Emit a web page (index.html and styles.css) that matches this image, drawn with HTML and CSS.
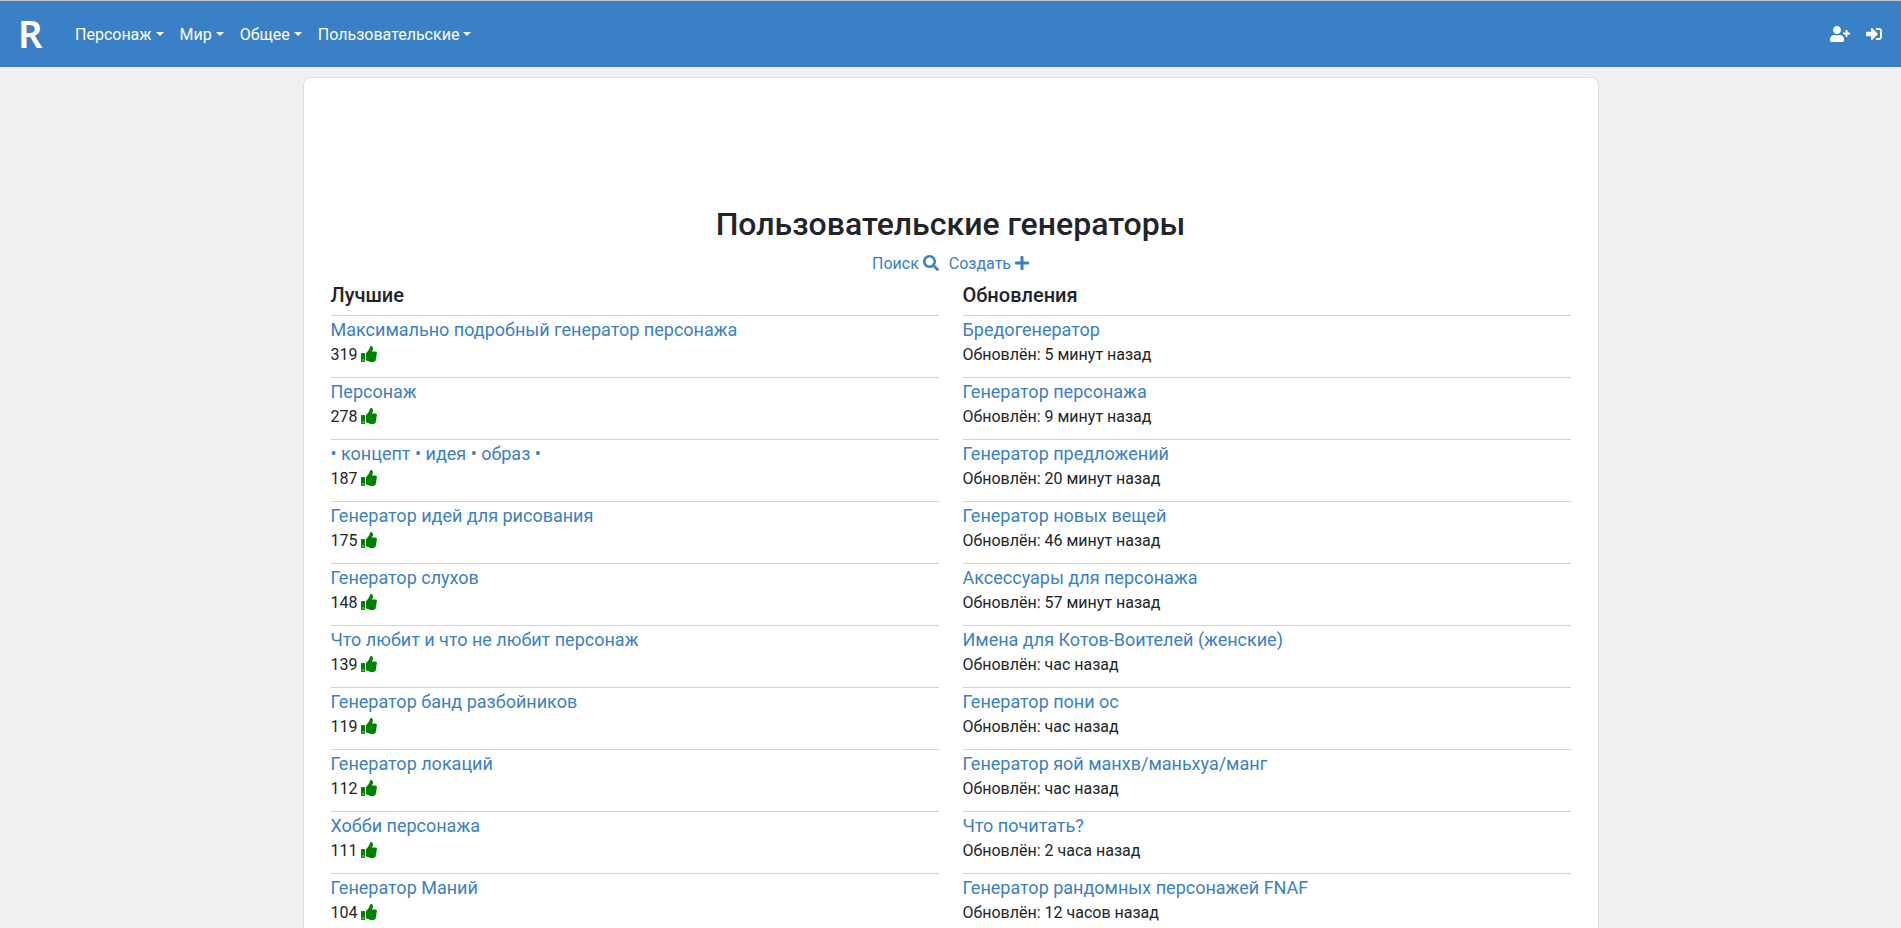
FILE: index.html
```html
<!DOCTYPE html>
<html lang="ru">
<head>
<meta charset="utf-8">
<title>Пользовательские генераторы</title>
<link rel="stylesheet" href="styles.css">
</head>
<body>
<svg class="sprite" aria-hidden="true">
  <symbol id="thumb" viewBox="0 0 512 512"><path d="M104 224H24c-13.255 0-24 10.745-24 24v240c0 13.255 10.745 24 24 24h80c13.255 0 24-10.745 24-24V248c0-13.255-10.745-24-24-24zM64 472c-13.255 0-24-10.745-24-24s10.745-24 24-24 24 10.745 24 24-10.745 24-24 24zM384 81.452c0 42.416-25.97 66.208-33.277 94.548h101.723c33.397 0 59.397 27.746 59.553 58.098.084 17.938-7.546 37.249-19.439 49.197l-.11.11c9.836 23.337 8.237 56.037-9.308 79.469 8.681 25.895-.069 57.704-16.382 74.757 4.298 17.598 2.244 32.575-6.148 44.632C440.202 511.587 389.616 512 346.839 512l-2.845-.001c-48.287-.017-87.806-17.598-119.56-31.725-15.957-7.099-36.821-15.887-52.651-16.178-6.54-.12-11.783-5.457-11.783-11.998v-213.77c0-3.2 1.282-6.271 3.558-8.521 39.614-39.144 56.648-80.587 89.117-113.111 14.804-14.832 20.188-37.236 25.393-58.902C282.515 39.293 291.817 0 312 0c24 0 72 8 72 81.452z"/></symbol>
</svg>
<nav class="navbar">
  <a class="brand" href="#">R</a>
  <div class="menu">
    <button class="menu-item" type="button">Персонаж</button>
    <button class="menu-item" type="button">Мир</button>
    <button class="menu-item" type="button">Общее</button>
    <button class="menu-item" type="button">Пользовательские</button>
  </div>
  <div class="account">
    <a class="account-link" href="#" aria-label="Регистрация"><svg class="icon icon-wide" viewBox="0 0 640 512"><path d="M624 208h-64v-64c0-8.800-7.200-16-16-16h-32c-8.800 0-16 7.200-16 16v64h-64c-8.800 0-16 7.200-16 16v32c0 8.800 7.200 16 16 16h64v64c0 8.800 7.200 16 16 16h32c8.800 0 16-7.200 16-16v-64h64c8.800 0 16-7.200 16-16v-32c0-8.800-7.200-16-16-16zM224 256c70.700 0 128-57.300 128-128S294.700 0 224 0 96 57.300 96 128s57.300 128 128 128zm89.600 32h-16.700c-22.200 10.200-46.900 16-72.900 16s-50.600-5.800-72.900-16h-16.700C60.200 288 0 348.200 0 422.400V464c0 26.500 21.500 48 48 48h352c26.500 0 48-21.500 48-48v-41.600c0-74.200-60.200-134.400-134.400-134.400z"/></svg></a>
    <a class="account-link" href="#" aria-label="Вход"><svg class="icon" viewBox="0 0 512 512"><path d="M416 448h-84c-6.600 0-12-5.400-12-12v-40c0-6.600 5.400-12 12-12h84c17.700 0 32-14.300 32-32V160c0-17.700-14.300-32-32-32h-84c-6.600 0-12-5.400-12-12V76c0-6.600 5.400-12 12-12h84c53 0 96 43 96 96v192c0 53-43 96-96 96zm-47-209L201 71c-15-15-41-4.500-41 17v96H24c-13.300 0-24 10.700-24 24v96c0 13.300 10.700 24 24 24h136v96c0 21.500 26 32 41 17l168-168c9.300-9.400 9.300-24.600 0-34z"/></svg></a>
  </div>
</nav>
<main class="card">
  <h1 class="title">Пользовательские генераторы</h1>
  <div class="actions">
    <a class="action" href="#">Поиск <svg class="icon" viewBox="0 0 512 512"><path d="M505 442.700L405.300 343c-4.500-4.500-10.600-7-17-7H372c27.600-35.300 44-79.700 44-128C416 93.100 322.900 0 208 0S0 93.100 0 208s93.100 208 208 208c48.300 0 92.700-16.400 128-44v16.300c0 6.400 2.500 12.500 7 17l99.700 99.700c9.400 9.400 24.600 9.400 33.900 0l28.300-28.300c9.400-9.400 9.400-24.600.1-34zM208 336c-70.700 0-128-57.200-128-128 0-70.700 57.200-128 128-128 70.700 0 128 57.200 128 128 0 70.700-57.200 128-128 128z"/></svg></a>
    <a class="action" href="#">Создать <svg class="icon icon-plus" viewBox="0 0 448 512"><path d="M416 208H272V64c0-17.670-14.330-32-32-32h-32c-17.670 0-32 14.330-32 32v144H32c-17.670 0-32 14.330-32 32v32c0 17.670 14.330 32 32 32h144v144c0 17.670 14.330 32 32 32h32c17.670 0 32-14.330 32-32V304h144c17.670 0 32-14.330 32-32v-32c0-17.670-14.330-32-32-32z"/></svg></a>
  </div>
  <div class="columns">
    <section class="column">
      <h2 class="heading">Лучшие</h2>
      <article class="entry"><a class="name" href="#">Максимально подробный генератор персонажа</a><p class="meta">319 <svg class="icon like"><use href="#thumb"/></svg></p></article>
      <article class="entry"><a class="name" href="#">Персонаж</a><p class="meta">278 <svg class="icon like"><use href="#thumb"/></svg></p></article>
      <article class="entry"><a class="name" href="#">• концепт • идея • образ •</a><p class="meta">187 <svg class="icon like"><use href="#thumb"/></svg></p></article>
      <article class="entry"><a class="name" href="#">Генератор идей для рисования</a><p class="meta">175 <svg class="icon like"><use href="#thumb"/></svg></p></article>
      <article class="entry"><a class="name" href="#">Генератор слухов</a><p class="meta">148 <svg class="icon like"><use href="#thumb"/></svg></p></article>
      <article class="entry"><a class="name" href="#">Что любит и что не любит персонаж</a><p class="meta">139 <svg class="icon like"><use href="#thumb"/></svg></p></article>
      <article class="entry"><a class="name" href="#">Генератор банд разбойников</a><p class="meta">119 <svg class="icon like"><use href="#thumb"/></svg></p></article>
      <article class="entry"><a class="name" href="#">Генератор локаций</a><p class="meta">112 <svg class="icon like"><use href="#thumb"/></svg></p></article>
      <article class="entry"><a class="name" href="#">Хобби персонажа</a><p class="meta">111 <svg class="icon like"><use href="#thumb"/></svg></p></article>
      <article class="entry"><a class="name" href="#">Генератор Маний</a><p class="meta">104 <svg class="icon like"><use href="#thumb"/></svg></p></article>
    </section>
    <section class="column">
      <h2 class="heading">Обновления</h2>
      <article class="entry"><a class="name" href="#">Бредогенератор</a><p class="meta">Обновлён: 5 минут назад</p></article>
      <article class="entry"><a class="name" href="#">Генератор персонажа</a><p class="meta">Обновлён: 9 минут назад</p></article>
      <article class="entry"><a class="name" href="#">Генератор предложений</a><p class="meta">Обновлён: 20 минут назад</p></article>
      <article class="entry"><a class="name" href="#">Генератор новых вещей</a><p class="meta">Обновлён: 46 минут назад</p></article>
      <article class="entry"><a class="name" href="#">Аксессуары для персонажа</a><p class="meta">Обновлён: 57 минут назад</p></article>
      <article class="entry"><a class="name" href="#">Имена для Котов-Воителей (женские)</a><p class="meta">Обновлён: час назад</p></article>
      <article class="entry"><a class="name" href="#">Генератор пони ос</a><p class="meta">Обновлён: час назад</p></article>
      <article class="entry"><a class="name" href="#">Генератор яой манхв/маньхуа/манг</a><p class="meta">Обновлён: час назад</p></article>
      <article class="entry"><a class="name" href="#">Что почитать?</a><p class="meta">Обновлён: 2 часа назад</p></article>
      <article class="entry"><a class="name" href="#">Генератор рандомных персонажей FNAF</a><p class="meta">Обновлён: 12 часов назад</p></article>
    </section>
  </div>
</main>
</body>
</html>
```

FILE: styles.css
```css
* { box-sizing: border-box; }

html { scrollbar-width: none; }

body {
  margin: 0;
  background: #f0f0f0;
  color: #212529;
  font: 16px/24px Roboto, "Liberation Sans", sans-serif;
}

a { color: #3a80c6; text-decoration: none; }

.sprite { display: none; }

.icon {
  width: 16px;
  height: 16px;
  fill: currentColor;
  vertical-align: -2px;
}

.icon-wide { width: 20px; }
.icon-plus { width: 14px; }

.navbar {
  display: flex;
  align-items: center;
  min-height: 67px;
  padding: 1px 11px 0 18px;
  border-top: 1px solid #c8c8c8;
  background: #3a80c6;
}

.brand {
  width: 49px;
  padding-bottom: 4px;
  color: #fff;
  font: 600 38px/48px "Noto Sans", sans-serif;
}

.menu { display: flex; }

.menu-item {
  display: flex;
  align-items: center;
  gap: 4px;
  padding: 8px;
  border: 0;
  background: none;
  color: #fff;
  font: inherit;
}

.menu-item::after {
  content: "";
  margin-bottom: 2px;
  border: 4px solid transparent;
  border-top-color: #fff;
  border-bottom: 0;
}

.account { display: flex; margin-left: auto; }

.account-link { padding: 8px; color: #fff; }

.card {
  max-width: 1296px;
  margin: 10px auto 24px;
  padding: 126px 27px 24px;
  border: 1px solid #dcdee0;
  border-radius: 8px;
  background: #fff;
}

.title {
  margin: 0 0 8px;
  font-size: 32px;
  font-weight: 500;
  line-height: 40px;
  text-align: center;
}

.actions {
  display: flex;
  justify-content: center;
  gap: 10px;
  margin-bottom: 7px;
}

.columns {
  display: grid;
  grid-template-columns: 1fr 1fr;
  gap: 24px;
}

.heading {
  margin: 0 0 8px;
  font-size: 20px;
  font-weight: 500;
  line-height: 24px;
}

.entry {
  padding-bottom: 10px;
  border-top: 1px solid #d0d1d2;
}

.name {
  display: block;
  font-size: 18px;
  line-height: 27px;
}

.meta { margin: 0; }

.like { color: green; }
```
